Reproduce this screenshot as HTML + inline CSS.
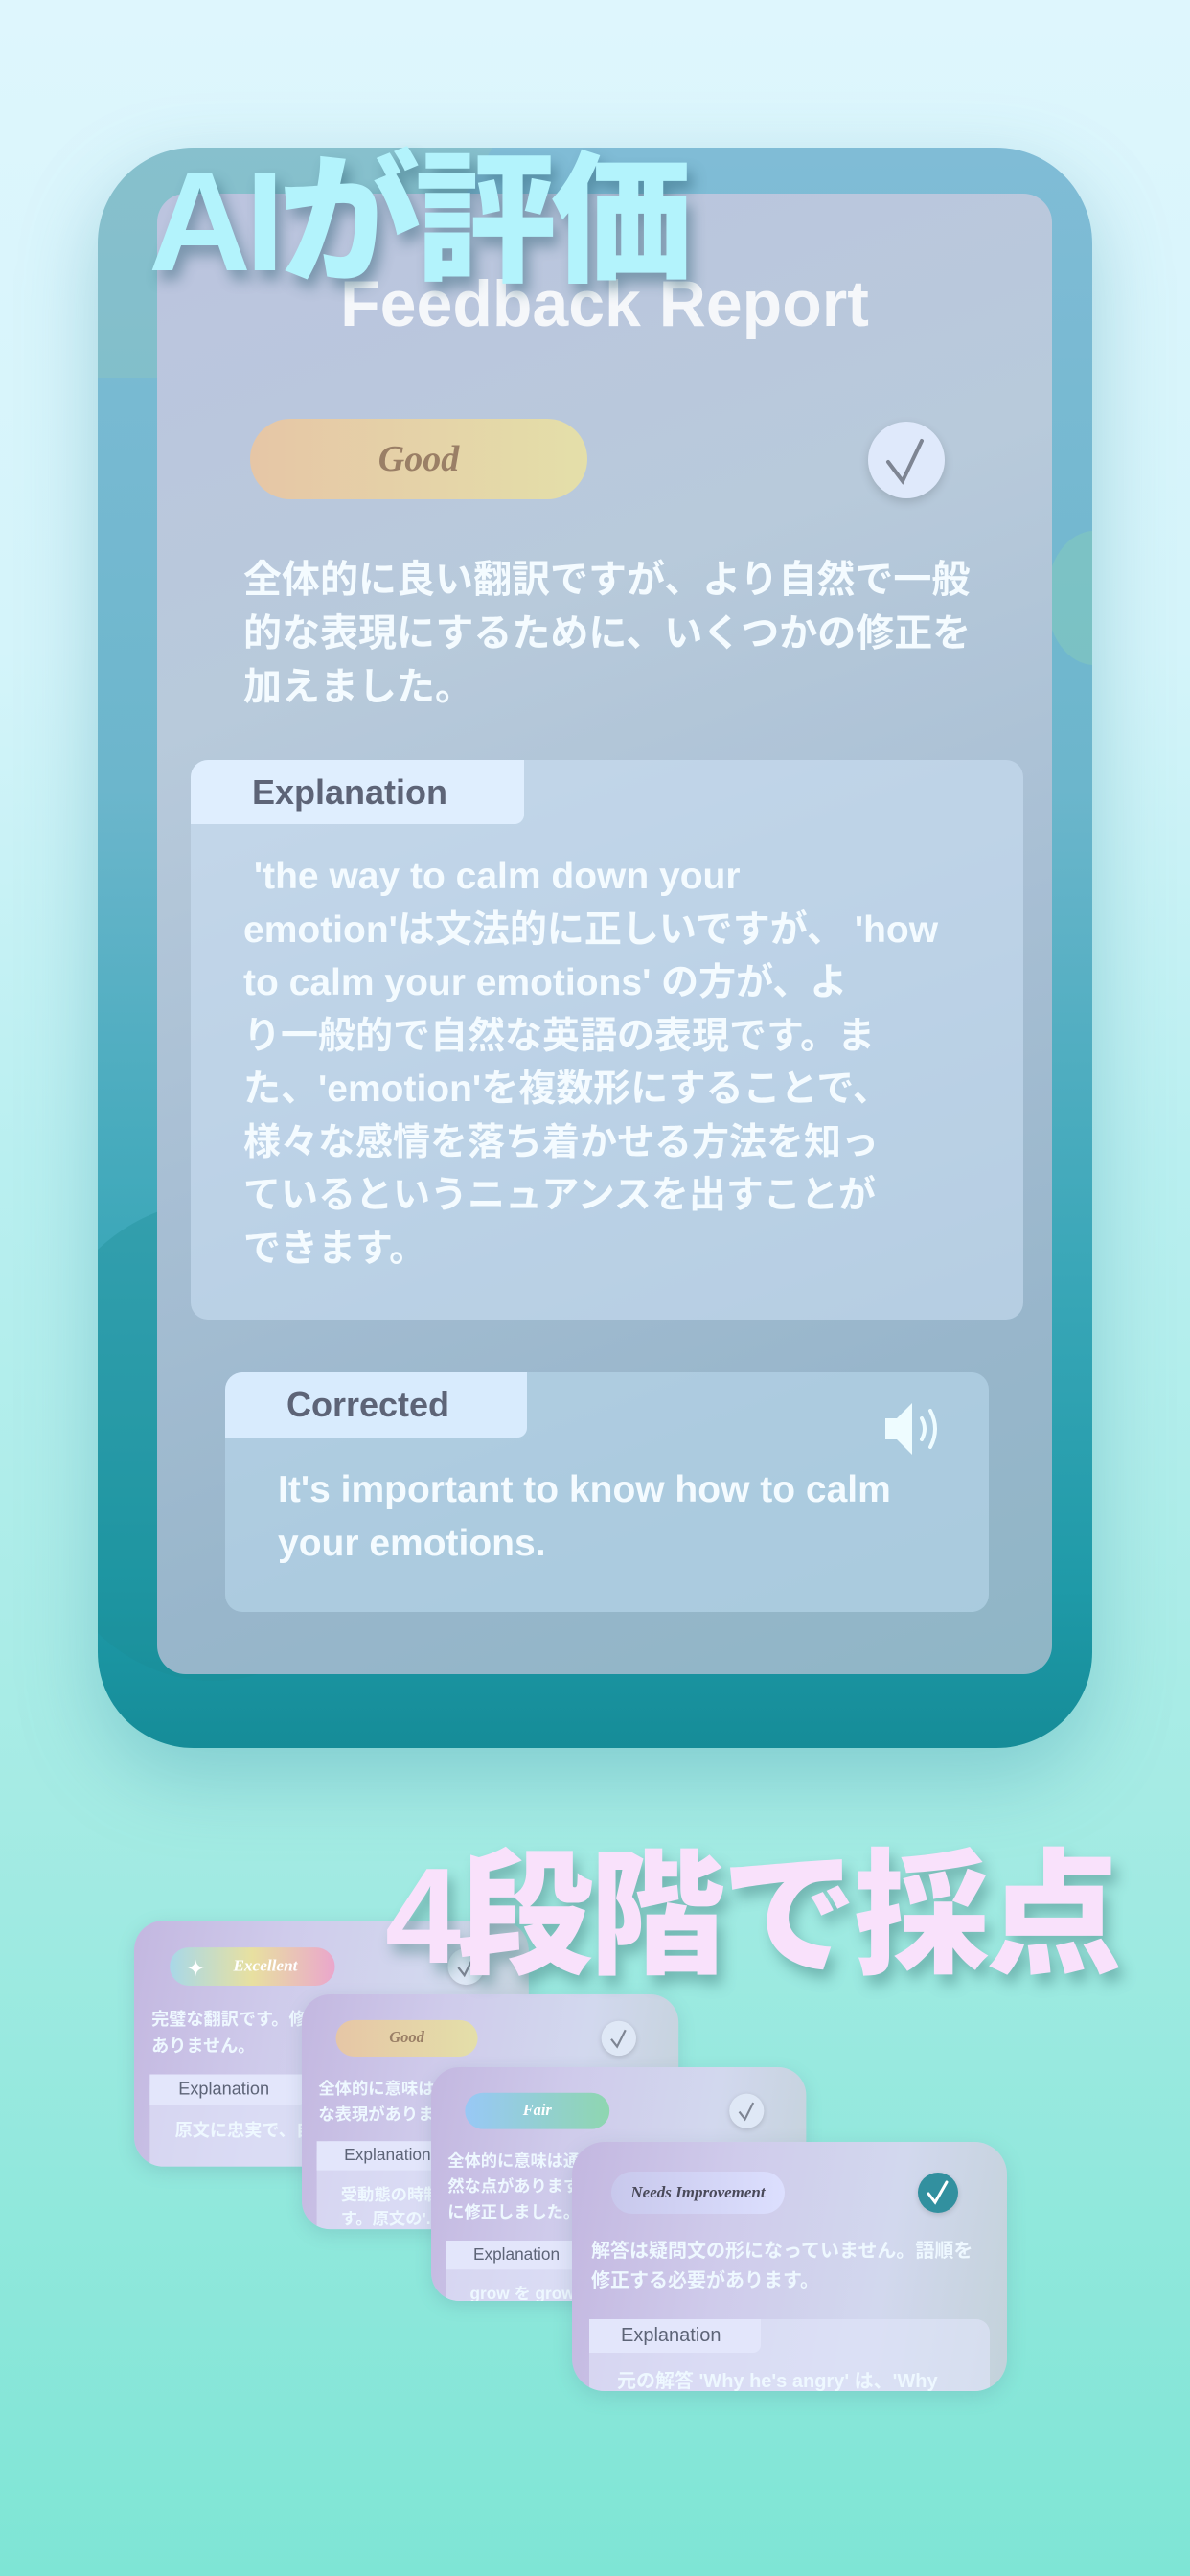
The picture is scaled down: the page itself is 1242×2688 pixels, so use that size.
<!DOCTYPE html>
<html><head><meta charset="utf-8">
<style>
*{margin:0;padding:0;box-sizing:border-box}
body{width:1242px;height:2688px;overflow:hidden;position:relative;font-family:"Liberation Sans","Noto Sans CJK JP",sans-serif;
background:linear-gradient(180deg,#def6fd 0%,#d4f4fa 25%,#b9eff0 45%,#a5ebe4 70%,#7ee5d5 100%);}
.abs{position:absolute}
.phone{left:102px;top:154px;width:1038px;height:1670px;border-radius:100px;overflow:hidden;
background:linear-gradient(180deg,#80bcd6 0%,#6cb6cc 40%,#3aa7b8 70%,#1f9aa8 90%,#158c98 100%);
box-shadow:0 30px 80px rgba(60,150,170,.35)}
.inner{left:62px;top:48px;width:934px;height:1545px;border-radius:30px;
background:linear-gradient(160deg,#bcc4df 0%,#b8cadb 30%,#a8bfd4 55%,#98b6cb 80%,#8fb6c6 100%)}
.jp{color:#f4fbff;font-size:40px;line-height:56px;font-weight:700}
.box{border-radius:18px;background:rgba(205,225,245,.55);overflow:hidden}
.tab{background:#dfeefe;color:#5d6477;font-weight:700;border-bottom-right-radius:10px}
.card{border-radius:34px;overflow:hidden;transform-origin:0 0;width:454px;height:283px;
background:linear-gradient(100deg,#c3b7e0 0%,#cfcbeb 35%,#d2d8ee 70%,#c3d2da 100%);box-shadow:0 6px 20px rgba(80,120,140,.2)}
.card .pill{position:absolute;left:41px;top:31px;height:44px;border-radius:22px;font-family:"Liberation Serif",serif;font-style:italic;font-weight:700;font-size:19px;line-height:44px;text-align:center}
.card .chk{position:absolute;left:361px;top:32px;width:42px;height:42px;border-radius:50%;background:#dfe8f6;box-shadow:0 2px 6px rgba(0,0,0,.15)}
.card .t{position:absolute;left:20px;top:99px;color:#eef8ff;font-size:20px;line-height:31px;font-weight:700;width:420px}
.card .eb{position:absolute;left:18px;top:177px;width:418px;height:120px;border-radius:14px;background:rgba(225,230,250,.6)}
.card .et{position:absolute;left:0;top:0;width:179px;height:35px;background:#e3e6fb;color:#5d6477;font-size:20px;line-height:35px;padding-left:33px;border-bottom-right-radius:8px}
.card .ex{position:absolute;left:29px;top:48px;color:#eef8ff;font-size:20px;font-weight:700;white-space:nowrap}
</style></head><body>

<div class="abs phone">
  <div class="abs" style="left:-200px;top:-60px;width:560px;height:300px;background:rgba(150,200,190,.35);transform:skewX(-30deg)"></div>
  <div class="abs" style="left:-80px;top:1100px;width:400px;height:500px;background:rgba(30,140,150,.35);border-radius:50%"></div>
  <div class="abs" style="left:990px;top:400px;width:100px;height:140px;background:rgba(130,200,190,.6);border-radius:50%"></div>
  <div class="abs inner">
    <div class="abs" style="left:0;top:76px;width:934px;text-align:center;color:rgba(255,255,255,.85);font-size:68px;font-weight:700">Feedback Report</div>
    <div class="abs" style="left:97px;top:235px;width:352px;height:84px;border-radius:42px;background:linear-gradient(90deg,#e6c6a6,#e4dfa9);color:#9a7f66;font-family:'Liberation Serif',serif;font-style:italic;font-weight:700;font-size:38px;line-height:84px;text-align:center">Good</div>
    <div class="abs" style="left:742px;top:238px;width:80px;height:80px;border-radius:50%;background:#dfe9fb;box-shadow:0 4px 10px rgba(0,0,0,.15)">
      <svg width="80" height="80"><path d="M21 42 L36 62 L56 20" stroke="#7e8593" stroke-width="4" fill="none" stroke-linecap="round"/></svg></div>
    <div class="abs jp" style="left:90px;top:375px;width:800px">全体的に良い翻訳ですが、より自然で一般<br>的な表現にするために、いくつかの修正を<br>加えました。</div>
    <div class="abs box" style="left:35px;top:591px;width:869px;height:584px">
      <div class="abs tab" style="left:0;top:0;width:348px;height:67px;font-size:36px;line-height:67px;padding-left:64px">Explanation</div>
      <div class="abs jp" style="left:55px;top:94px;width:780px;line-height:55.5px;font-size:39px">&nbsp;'the way to calm down your<br>emotion'は文法的に正しいですが、 'how<br>to calm your emotions' の方が、よ<br>り一般的で自然な英語の表現です。ま<br>た、'emotion'を複数形にすることで、<br>様々な感情を落ち着かせる方法を知っ<br>ているというニュアンスを出すことが<br>できます。</div>
    </div>
    <div class="abs box" style="left:71px;top:1230px;width:797px;height:250px;background:rgba(190,220,240,.55)">
      <div class="abs tab" style="left:0;top:0;width:315px;height:68px;font-size:36px;line-height:68px;padding-left:64px;background:#d8ebfd">Corrected</div>
      <svg class="abs" style="left:685px;top:24px" width="70" height="70"><path d="M4 24 H16 L32 8 V62 L16 46 H4 Z" fill="#eefcff"/><path d="M42 24 Q48 35 42 46" stroke="#eefcff" stroke-width="4" fill="none" stroke-linecap="round"/><path d="M51 16 Q61 35 51 54" stroke="#eefcff" stroke-width="4" fill="none" stroke-linecap="round"/></svg>
      <div class="abs jp" style="left:55px;top:95px;font-size:39px;line-height:56px;width:720px">It's important to know how to calm<br>your emotions.</div>
    </div>
  </div>
</div>

<div class="abs" style="left:155px;top:142px;font-size:148px;font-weight:900;color:#b3f3fc;letter-spacing:-6px;text-shadow:6px 10px 14px rgba(40,90,110,.45);line-height:180px">AIが評価</div>

<!-- small cards -->
<div class="abs card" style="left:140px;top:2004px;transform:scale(.907)">
  <div class="pill" style="width:190px;background:linear-gradient(90deg,#a8d8e8,#e8e0a0 50%,#eaa6cc);color:#fff;padding-left:30px">Excellent</div>
  <div class="abs" style="left:60px;top:40px;color:#fff;font-size:26px">✦</div>
  <div class="chk"><svg width="42" height="42"><path d="M12 22 L19 31 L29 11" stroke="#7e8593" stroke-width="2.5" fill="none"/></svg></div>
  <div class="t">完璧な翻訳です。修正する必要は<br>ありません。</div>
  <div class="eb"><div class="et">Explanation</div><div class="ex">原文に忠実で、自然な表現です。</div></div>
</div>
<div class="abs card" style="left:315px;top:2081px;transform:scale(.866)">
  <div class="pill" style="width:171px;background:linear-gradient(90deg,#e6c6a6,#e4dfa9);color:#9a7f66">Good</div>
  <div class="chk"><svg width="42" height="42"><path d="M12 22 L19 31 L29 11" stroke="#7e8593" stroke-width="2.5" fill="none"/></svg></div>
  <div class="t">全体的に意味は通じますが、より自然<br>な表現があります。</div>
  <div class="eb"><div class="et">Explanation</div><div class="ex">受動態の時制が正しくないで<br>す。原文の'...'</div></div>
</div>
<div class="abs card" style="left:450px;top:2157px;transform:scale(.862)">
  <div class="pill" style="width:175px;background:linear-gradient(90deg,#98c8f6,#8ed6b0);color:#fff">Fair</div>
  <div class="chk"><svg width="42" height="42"><path d="M12 22 L19 31 L29 11" stroke="#7e8593" stroke-width="2.5" fill="none"/></svg></div>
  <div class="t">全体的に意味は通じますが、不自<br>然な点があります。より自然な表現<br>に修正しました。</div>
  <div class="eb" style="top:210px"><div class="et">Explanation</div><div class="ex">grow を grown に</div></div>
</div>
<div class="abs card" style="left:597px;top:2235px;height:260px">
  <div class="pill" style="width:181px;background:linear-gradient(90deg,#c8c8ec,#dcdffe);color:#4a4a5a;font-size:17px">Needs Improvement</div>
  <div class="chk" style="background:#32909f"><svg width="42" height="42"><path d="M11 22 L18 31 L30 10" stroke="#fff" stroke-width="3" fill="none" stroke-linecap="round"/></svg></div>
  <div class="t">解答は疑問文の形になっていません。語順を<br>修正する必要があります。</div>
  <div class="eb" style="top:185px"><div class="et">Explanation</div><div class="ex">元の解答 'Why he's angry' は、'Why</div></div>
</div>

<div class="abs" style="left:402px;top:1915px;font-size:142px;font-weight:900;color:#f9e1fb;letter-spacing:-4px;text-shadow:6px 10px 14px rgba(60,120,120,.45);line-height:170px;white-space:nowrap">4段階で採点</div>
</body></html>
